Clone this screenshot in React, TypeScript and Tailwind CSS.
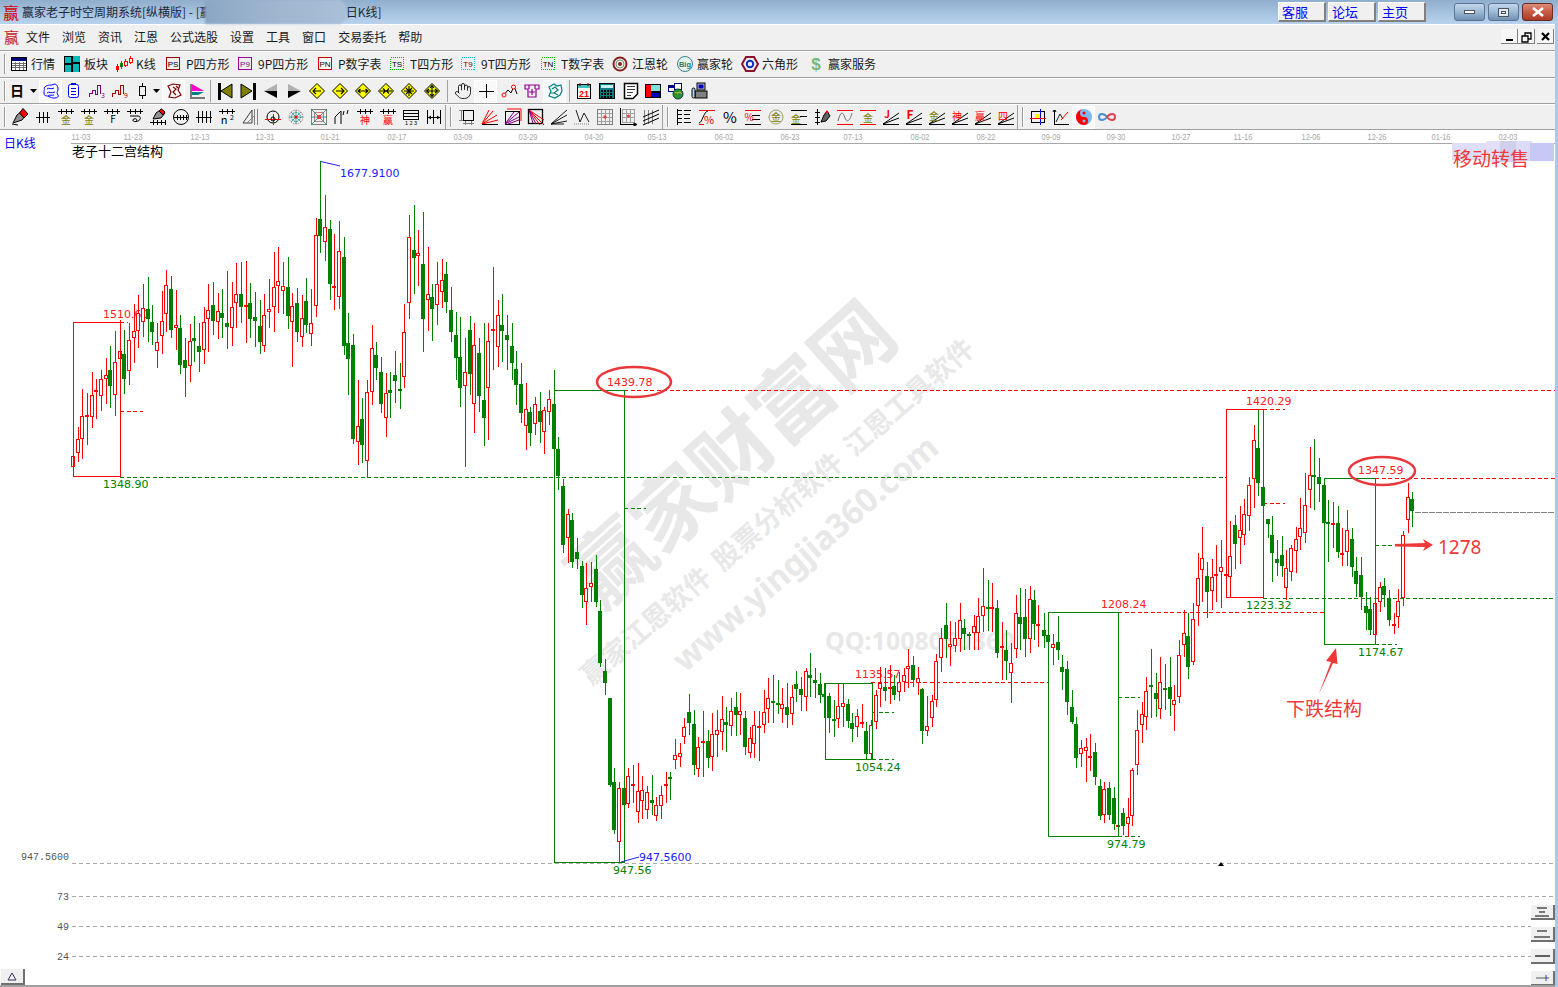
import React from "react";
import { Hand } from "lucide-react";

type Row = [number, number, number, number, number, number];

// candles read from the chart: x, high, body top, body bottom, low, 1 = up (red)
const left: Row[] = [
  [204,918,918,950,950,1],[218,830,868,910,935,1],[229,716,798,868,928,1],[243,728,796,800,885,1],[257,666,736,800,833,1],[269,688,720,724,806,1],[282,660,688,737,782,1],[296,624,676,688,762,1],[308,588,660,708,775,0],[322,543,637,734,797,1],
  [336,510,604,628,680,1],[347,540,612,687,732,0],[361,520,571,662,705,1],[375,462,544,563,640,1],[387,436,490,544,593,1],[400,402,475,515,560,1],[414,380,477,507,575,0],[425,465,516,545,585,0],[439,520,576,602,653,1],[453,422,514,557,612,1],
  [465,360,406,491,545,1],[478,378,417,540,563,0],[492,420,526,533,600,1],[504,495,534,645,672,0],[518,565,630,654,740,0],[532,522,574,647,695,1],[543,498,564,572,635,0],[557,520,588,606,665,0],[571,470,517,599,642,1],[582,402,481,506,605,1],
  [596,395,465,513,555,0],[610,430,484,517,567,1],[621,417,489,503,565,0],[635,363,519,530,596,0],[649,397,472,533,588,1],[660,339,433,458,535,1],[674,336,432,470,518,0],[688,333,466,468,580,1],[700,400,460,507,565,0],[714,425,501,513,590,0],
  [728,450,528,576,612,0],[739,432,496,587,605,1],[753,388,478,485,533,1],[767,306,412,470,545,1],[778,291,394,407,490,1],[792,335,409,422,492,1],[806,321,411,497,537,0],[817,430,469,517,650,1],[831,415,460,545,575,0],[845,435,505,562,590,1],
  [856,383,453,525,550,0],[870,416,520,551,587,1],[884,205,256,467,500,1],[896,35,207,257,308,0],[909,135,232,277,333,1],[924,210,237,402,450,0],[936,252,408,410,480,1],[949,213,304,440,478,1],[963,262,321,587,615,0],[974,490,579,626,735,0],
  [988,552,585,866,882,0],[1002,690,829,875,945,1],[1013,744,807,884,938,0],[1027,690,727,932,980,1],[1041,525,595,727,765,1],[1052,575,615,654,690,0],[1066,621,666,762,790,0],[1080,670,730,803,860,1],[1092,665,720,728,804,0],[1106,603,675,693,760,0],
  [1120,640,717,721,777,0],[1131,462,547,680,715,1],[1145,195,262,458,507,1],[1159,165,300,323,432,0],[1170,240,310,319,407,1],[1184,186,342,507,605,0],[1198,291,433,449,543,1],[1209,403,441,476,573,0],[1223,336,403,464,525,1],[1237,327,391,425,473,1],
  [1248,337,372,456,490,0],[1262,411,480,546,575,0],[1276,487,555,623,690,0],[1288,502,622,714,770,0],[1302,565,667,707,950,1],[1316,498,541,671,735,0],[1327,518,586,761,848,1],[1341,565,610,738,785,0],[1355,520,750,804,887,0],[1366,518,574,713,869,1],
  [1380,351,537,540,660,1],[1394,450,496,590,650,1],[1406,432,525,543,636,0],[1419,495,555,570,660,0],[1433,518,588,639,690,0],[1444,603,657,705,765,0],[1458,640,702,788,820,0],[1472,700,778,827,900,1],[1484,770,786,849,888,0],[1498,742,763,821,855,1],
  [1512,727,783,816,880,0],[1523,770,781,845,912,1],[1537,720,748,785,825,1],[1551,660,762,897,960,0],[1562,860,897,977,1020,0],
];

const middle: Row[] = [
  [69,358,378,555,580,0],[84,448,463,533,610,1],[96,460,480,606,624,0],[111,535,576,597,628,0],[126,603,618,705,743,0],[138,610,685,725,795,1],[153,605,670,682,725,1],[168,585,627,725,740,0],[180,720,753,908,922,0],[195,898,934,968,1005,0],
  [210,1014,1014,1275,1280,0],[222,1225,1266,1410,1422,0],[237,1265,1285,1445,1507,1],[252,1240,1284,1334,1345,0],[264,1225,1249,1331,1345,1],[279,1215,1272,1274,1330,1],[294,1210,1294,1357,1390,1],[306,1248,1291,1324,1378,1],[321,1278,1297,1351,1378,1],[336,1245,1320,1329,1365,0],
  [348,1310,1336,1367,1382,1],[363,1278,1306,1339,1378,1],[378,1235,1272,1275,1330,1],[390,1237,1252,1256,1320,0],[405,1137,1186,1201,1227,1],[420,1150,1178,1190,1220,1],[432,1073,1102,1130,1152,1],[447,1003,1056,1089,1125,0],[462,1050,1092,1215,1245,0],[474,1130,1162,1226,1250,1],
  [489,1052,1143,1145,1250,1],[504,1110,1143,1194,1225,0],[516,1060,1123,1190,1232,1],[531,1050,1111,1124,1190,1],[546,1008,1078,1115,1170,1],[558,1040,1086,1096,1175,0],[573,1014,1054,1097,1128,1],[588,996,1041,1066,1128,0],[600,1000,1054,1064,1125,1],[615,1052,1075,1161,1185,0],
  [630,1100,1133,1178,1195,1],[642,1054,1096,1151,1195,1],[657,1054,1097,1105,1202,1],[672,990,1057,1094,1118,1],[684,955,1015,1048,1090,1],[699,945,1023,1027,1090,0],[714,960,1028,1030,1062,0],[726,985,1031,1046,1090,1],[741,970,1041,1065,1103,0],[756,975,1012,1061,1095,1],
  [768,932,973,987,1025,0],[783,950,987,1005,1052,0],[798,925,934,1010,1052,1],[810,880,945,953,1012,0],[825,925,961,968,1015,0],[840,940,972,1004,1030,0],[852,968,1003,1012,1075,0],[867,998,1008,1074,1118,0],[882,1020,1078,1081,1130,0],[894,970,1039,1076,1105,1],
  [909,968,1030,1042,1100,1],[924,1018,1033,1083,1105,0],[936,1060,1090,1108,1145,0],[951,1047,1069,1102,1130,1],[966,1032,1087,1088,1105,1],[978,1085,1114,1182,1198,0],[993,1080,1094,1181,1200,1],[1008,990,1006,1085,1107,1],[1020,920,968,988,1040,1],[1035,925,982,992,1022,0],
  [1050,915,982,984,1032,1],[1062,945,979,1004,1020,0],[1077,935,965,995,1022,1],[1092,925,946,965,995,1],[1104,868,919,926,985,1],[1119,888,915,960,980,0],[1134,920,955,970,1005,1],[1146,985,987,1112,1152,0],[1161,1008,1099,1112,1127,1],[1176,1005,1024,1073,1100,1],
  [1188,882,902,1020,1040,1],[1203,803,835,893,935,1],[1218,730,796,837,895,0],[1230,782,853,862,918,1],[1245,785,835,857,875,1],[1260,730,781,838,875,1],[1272,776,804,822,870,0],[1287,815,823,825,870,0],[1302,765,799,820,870,1],[1314,715,768,818,870,1],
  [1329,625,737,767,815,1],[1344,660,742,744,812,0],[1356,670,740,748,815,1],[1371,720,745,878,895,0],[1386,785,859,865,960,1],[1398,810,870,902,960,0],[1413,850,908,938,1030,1],[1428,705,760,868,895,1],[1440,685,771,792,870,0],[1455,688,771,838,892,0],
  [1470,678,718,838,880,1],[1482,690,720,792,840,0],[1494,735,792,794,862,1],
];

const right: Row[] = [
  [12,700,751,767,805,0],[24,735,766,785,830,0],[39,763,793,803,855,1],[54,708,786,809,840,0],[66,825,862,875,930,0],[81,843,867,965,1005,0],[96,930,982,1025,1032,0],[108,1012,1033,1133,1165,0],[123,1080,1105,1123,1160,1],[138,1075,1102,1112,1205,1],
  [150,1063,1127,1129,1173,1],[165,1090,1117,1190,1215,0],[180,1197,1218,1307,1320,0],[192,1205,1228,1306,1328,1],[207,1206,1224,1305,1320,0],[222,1220,1254,1331,1350,0],[234,1285,1336,1342,1370,1],[249,1283,1300,1337,1365,0],[264,1255,1312,1333,1372,1],[276,1165,1171,1309,1337,1],
  [291,990,1051,1154,1185,1],[306,965,1003,1034,1090,1],[318,890,934,1012,1050,1],[333,808,915,919,1015,0],[348,880,940,956,1010,0],[360,830,907,986,1018,1],[375,852,924,927,990,0],[390,832,922,957,1007,0],[402,915,961,976,1052,1],[417,780,826,950,970,1],
  [432,690,760,796,830,1],[444,700,768,860,897,0],[459,670,718,845,855,1],[474,520,595,677,738,1],[486,442,535,569,665,1],[501,545,588,635,714,0],[516,537,592,632,690,1],[528,495,583,589,665,1],[543,480,562,577,683,1],[558,495,582,584,652,1],
  [570,423,529,590,650,1],[585,405,435,491,567,0],[600,378,451,475,552,1],[612,358,403,466,495,1],[627,292,316,409,452,1],[642,135,181,298,385,1],[654,90,204,308,347,0],[669,295,321,377,480,0],[684,418,418,431,475,0],[696,408,465,518,605,0],
  [711,480,538,548,587,0],[726,467,526,557,590,0],[738,510,565,625,660,1],[753,495,503,577,603,1],[768,440,478,512,580,1],[780,353,443,470,510,1],[795,280,376,460,490,1],[810,200,284,331,383,1],[822,178,286,289,390,0],[837,235,292,311,367,0],
  [852,315,316,430,455,0],[864,360,425,430,545,0],[879,367,428,436,505,1],[894,378,430,515,535,0],[906,445,520,523,557,1],[921,390,451,517,557,1],[936,445,478,560,590,0],[948,530,574,613,650,0],[963,530,586,650,690,0],[978,637,679,700,750,0],
  [990,650,688,749,765,0],[1005,655,670,766,795,1],[1020,605,622,667,695,1],[1032,595,619,644,680,0],[1047,630,656,720,738,0],[1062,700,731,733,762,1],[1074,628,664,712,745,1],[1089,453,466,655,678,1],[1104,310,350,421,460,1],[1116,337,358,394,440,0],
];

const toPage = (rows: Row[], sx: number, ox: number, oy: number) =>
  rows.map(([x, h, t, b, l, up]) => ({
    x: Math.round(ox + x / sx),
    h: Math.round(oy + h / 3),
    t: Math.round(oy + t / 3),
    b: Math.round(oy + b / 3),
    l: Math.round(oy + l / 3),
    up: up === 1,
  }));

const candles = [
  ...toPage(left, 2.8, 0, 150),
  ...toPage(middle, 3, 540, 360),
  ...toPage(right, 3, 1040, 380),
];

const RED = "#ff0000";
const GREEN = "#008000";

const dates: [string, number][] = [
  ["11-03", 81], ["11-23", 133], ["12-13", 200], ["12-31", 265], ["01-21", 330], ["02-17", 397], ["03-09", 463], ["03-29", 528],
  ["04-20", 594], ["05-13", 657], ["06-02", 724], ["06-23", 790], ["07-13", 853], ["08-02", 920], ["08-22", 986], ["09-09", 1051],
  ["09-30", 1116], ["10-27", 1181], ["11-16", 1243], ["12-06", 1311], ["12-26", 1377], ["01-16", 1441], ["02-03", 1508],
];

// x1, x2, y, colour
const dashes: [number, number, number, string][] = [
  [624, 1556, 390.5, RED], [120, 1226, 477.5, GREEN], [1375, 1556, 478.5, RED], [120, 128, 322.5, RED], [120, 143, 411.5, RED],
  [624, 646, 508.5, GREEN], [871, 1048, 682.5, RED], [872, 894, 712.5, GREEN], [872, 894, 759.5, GREEN], [1118, 1140, 697.5, GREEN],
  [1118, 1324, 612.5, RED], [1263, 1285, 409.5, RED], [1263, 1285, 503.5, RED], [1263, 1556, 598.5, GREEN], [1375, 1397, 545.5, GREEN],
  [1375, 1397, 644.5, GREEN], [1118, 1140, 836.5, GREEN],
];

const boxes: [number, number, number, number, string][] = [
  [73, 322, 47, 154, RED], [554, 390, 70, 472, GREEN], [825, 683, 47, 76, GREEN], [1048, 612, 70, 224, GREEN], [1226, 409, 37, 188, RED], [1324, 478, 51, 166, GREEN],
];

// x, y, text, colour
const labels: [number, number, string, string][] = [
  [340, 177, "1677.9100", "#2020ff"], [103, 318, "1510.60", "#ff2020"], [103, 488, "1348.90", GREEN], [607, 386, "1439.78", "#ff2020"],
  [613, 874, "947.56", GREEN], [639, 861, "947.5600", "#2020ff"], [855, 678, "1135.57", "#ff2020"], [855, 771, "1054.24", GREEN],
  [1101, 608, "1208.24", "#ff2020"], [1107, 848, "974.79", GREEN], [1246, 405, "1420.29", "#ff2020"], [1246, 609, "1223.32", GREEN],
  [1358, 474, "1347.59", "#ff2020"], [1358, 656, "1174.67", GREEN],
];

const Chart = () => (
  <svg width={1555} height={857} viewBox="0 130 1555 857" className="block bg-white">
    {dates.map(([d, x]) => (
      <text key={x} x={x} y={140} textAnchor="middle" fontSize={9} textLength={19} lengthAdjust="spacingAndGlyphs" fill="#a8a8a8" className="font-['Liberation_Sans',sans-serif]">{d}</text>
    ))}
    <path d="M71 143.5H1555" stroke="#a8a8a8" />
    <text x={4} y={148} fontSize={12} fill="#0000ff">日K线</text>
    <text x={72} y={156} fontSize={13} fill="#000">老子十二宫结构</text>

    <g fill="#e8e8e8" fontWeight={700}>
      <text x={733} y={483} fontSize={81} textAnchor="middle" transform="rotate(-42 733 455)">赢家财富网</text>
      <text x={778} y={521} fontSize={27} textAnchor="middle" transform="rotate(-41 778 512)" wordSpacing={6}>赢家江恩软件 股票分析软件 江恩工具软件</text>
      <text x={805} y={565} fontSize={33} textAnchor="middle" transform="rotate(-41 805 553)" className="font-['Noto_Sans',sans-serif]">www.yingjia360.com</text>
      <text x={825} y={650} fontSize={25} className="font-['Noto_Sans',sans-serif]">QQ:1008050360</text>
    </g>

    <g fill="#dedef8" shapeRendering="crispEdges">
      <rect x={1452} y={143} width={34} height={17} />
      <rect x={1486} y={141} width={30} height={21} fill="#e0e0f8" />
      <rect x={1500} y={141} width={16} height={21} fill="#d0d0ee" />
      <rect x={1516} y={141} width={16} height={20} fill="#dcdcf6" />
      <rect x={1530} y={143} width={24} height={18} fill="#c8c8f6" />
    </g>

    <g strokeDasharray="4 2.5" fill="none" shapeRendering="crispEdges">
      {dashes.map(([x1, x2, y, c]) => (
        <path key={`${x1}-${y}`} d={`M${x1} ${y}H${x2}`} stroke={c} />
      ))}
    </g>
    <path d="M1415 512.5H1554" stroke="#808080" strokeDasharray="6 1" shapeRendering="crispEdges" />
    <g stroke="#aaaaaa" strokeDasharray="4 3" shapeRendering="crispEdges">
      <path d="M72 863.5H1555" />
      <path d="M72 896.5H1555" />
      <path d="M72 926.5H1531" />
      <path d="M72 956.5H1531" />
    </g>
    <g fontSize={10} fill="#555555" textAnchor="end" className="font-['Liberation_Mono',monospace]">
      <text x={69} y={860}>947.5600</text>
      <text x={69} y={900}>73</text>
      <text x={69} y={930}>49</text>
      <text x={69} y={960}>24</text>
    </g>

    <g fontSize={11} className="font-['DejaVu_Sans',sans-serif]">
      {labels.map(([x, y, t, c]) => (
        <text key={t} x={x} y={y} fill={c}>{t}</text>
      ))}
    </g>

    <g shapeRendering="crispEdges">
      {candles.map((c) => {
        const color = c.up ? RED : GREEN;
        return (
          <g key={c.x}>
            <path d={`M${c.x + 0.5} ${c.h}V${c.l}`} stroke={color} />
            {c.up && c.b - c.t > 1 ? (
              <rect x={c.x - 1.5} y={c.t + 0.5} width={3} height={c.b - c.t - 1} fill="#fff" stroke={color} />
            ) : (
              <rect x={c.x - 2} y={c.t} width={4} height={Math.max(c.b - c.t, 2)} fill={color} />
            )}
          </g>
        );
      })}
      {boxes.map(([x, y, w, h, c]) => (
        <rect key={x} x={x + 0.5} y={y + 0.5} width={w} height={h} fill="none" stroke={c} />
      ))}
      <path d="M320.5 161V200" stroke={GREEN} />
    </g>

    <path d="M321 161.5L340 166" stroke="#2020ff" />
    <path d="M621 862L639 857" stroke="#2020ff" />
    <path d="M1218 866L1221 862L1224 866Z" fill="#000" />

    <ellipse cx={634} cy={382} rx={37} ry={15} fill="none" stroke="#e8383c" strokeWidth={2.5} />
    <ellipse cx={1382} cy={471} rx={33} ry={14} fill="none" stroke="#e8383c" strokeWidth={2.5} />
    <path d="M1395 544L1425 543L1423 539L1433 545L1423 551L1425 547L1395 546.5Z" fill="#f03838" />
    <path d="M1318.5 695L1331 662L1326 661L1336 648L1337.5 664L1333 663Z" fill="#f03838" />
    <text x={1438} y={554} fontSize={19} fill="#f03838" className="font-['Noto_Sans',sans-serif]">1278</text>
    <text x={1286} y={716} fontSize={19} fill="#f03838">下跌结构</text>
    <text x={1453} y={166} fontSize={19} fill="#f03838">移动转售</text>
  </svg>
);

// icons ------------------------------------------------------------------
const Ico = ({ children, w = 18 }: { children: React.ReactNode; w?: number }) => (
  <svg width={w} height={18} viewBox={`0 0 ${w} 18`} fill="none" stroke="#000" className="block">
    {children}
  </svg>
);

const comb = <path shapeRendering="crispEdges" d="M1 3.5H17M4.5 1V6M9.5 1V6M14.5 1V6" />;
const fan = <path d="M1 16L17 5M1 16L17 10M1 16.5H17" />;
const rules = <path shapeRendering="crispEdges" d="M1 2.5H17M1 16.5H17" stroke="#ff0000" />;

const Txt = ({ x = 9, y, s = 10, c = "#000", b = false, children }: { x?: number; y: number; s?: number; c?: string; b?: boolean; children: React.ReactNode }) => (
  <text x={x} y={y} fontSize={s} fill={c} stroke="none" textAnchor="middle" fontWeight={b ? 700 : 400}>
    {children}
  </text>
);

const BoxIcon = ({ t, c, fill = "#f0f0f0" }: { t: string; c: string; fill?: string }) => (
  <Ico w={18}>
    <rect x={1.5} y={2.5} width={13} height={12} fill={fill} stroke={c} strokeDasharray={c === "#00c000" || c === "#00c8c8" ? "1 1" : undefined} shapeRendering="crispEdges" />
    <text x={8} y={12} fontSize={8} textAnchor="middle" fill={c === "#a000a0" ? "#800080" : c === "#00c8c8" ? "#800000" : "#000"} stroke="none" className="font-['Liberation_Sans',sans-serif]">{t}</text>
  </Ico>
);

const Diamond = ({ d }: { d: string }) => (
  <Ico>
    <path d="M9 1.5L16.5 9L9 16.5L1.5 9Z" fill="#ffff00" />
    <path d={d} strokeWidth={1.1} />
  </Ico>
);

const topBar: [React.ReactNode, string, string][] = [
  [<Ico><rect x={1.5} y={2.5} width={15} height={13} fill="#fff" /><rect x={2} y={3} width={14} height={3} fill="#000080" stroke="none" /><path shapeRendering="crispEdges" stroke="#707070" d="M2 8.5H16M2 10.5H16M2 12.5H16M5.5 7V15M9.5 7V15M13.5 7V15" /></Ico>, "行情", "w-[53px]"],
  [<Ico><rect x={1} y={1} width={16} height={16} fill="#000" stroke="none" /><g fill="#00b8b8" stroke="none"><rect x={2} y={2} width={6} height={6} /><rect x={10} y={1} width={7} height={6} /><rect x={2} y={10} width={6} height={7} /><rect x={10} y={9} width={6} height={8} /></g></Ico>, "板块", "w-[52px]"],
  [<Ico><g shapeRendering="crispEdges"><path stroke="#ff0000" d="M2.5 9V17M10.5 4V12M15.5 1V9" /><path stroke="#008000" d="M6.5 6V14" /><rect x={1} y={11} width={3} height={4} fill="#ff0000" stroke="none" /><rect x={5} y={8} width={3} height={4} fill="#008000" stroke="none" /><rect x={9} y={6} width={3} height={4} fill="#fff" stroke="#ff0000" /><rect x={14} y={3} width={3} height={4} fill="#fff" stroke="#ff0000" /></g></Ico>, "K线", "w-[50px]"],
  [<BoxIcon t="PS" c="#a00000" />, "P四方形", "w-[72px]"],
  [<BoxIcon t="P9" c="#a000a0" />, "9P四方形", "w-[80px]"],
  [<BoxIcon t="PN" c="#d00000" fill="#fff" />, "P数字表", "w-[72px]"],
  [<BoxIcon t="TS" c="#00c000" />, "T四方形", "w-[71px]"],
  [<BoxIcon t="T9" c="#00c8c8" />, "9T四方形", "w-[80px]"],
  [<BoxIcon t="TN" c="#00c000" />, "T数字表", "w-[71px]"],
  [<Ico><circle cx={9} cy={9} r={6.5} stroke="#8a1f1f" strokeWidth={2} /><circle cx={9} cy={9} r={4} stroke="#6a9a7a" /><circle cx={9} cy={9} r={2} fill="#8a1f1f" stroke="none" /></Ico>, "江恩轮", "w-[65px]"],
  [<Ico><circle cx={9} cy={9} r={7.5} stroke="#3f7f90" fill="#e6f2f2" /><text x={9} y={12} fontSize={7.5} fontWeight={700} textAnchor="middle" fill="#2f7a6a" stroke="none" className="font-['Liberation_Sans',sans-serif]">Big</text></Ico>, "赢家轮", "w-[65px]"],
  [<Ico><path d="M5 2H13L17 9L13 16H5L1 9Z" stroke="#8a1030" strokeWidth={2} /><circle cx={9} cy={9} r={3.2} stroke="#1030c0" strokeWidth={2} /></Ico>, "六角形", "w-[66px]"],
  [<Ico><text x={9} y={15} fontSize={17} fontWeight={700} textAnchor="middle" fill="#78b878" stroke="none" className="font-['Liberation_Sans',sans-serif]">$</text></Ico>, "赢家服务", "w-[70px]"],
];

const Slot = ({ on, children, cls = "w-[23px]" }: { on?: boolean; children?: React.ReactNode; cls?: string }) => (
  <div className={`flex h-[23px] shrink-0 items-center justify-center ${cls} ${on ? "border border-white bg-[#f9f9f9]" : ""}`}>{children}</div>
);

const Grip = () => <div className="h-[20px] w-[2px] shrink-0 border-l border-[#9a9a9a] bg-white" />;

const midBar: React.ReactNode[] = [
  <Slot key="a1" cls="w-[22px]"><Ico><text x={9} y={14} fontSize={14} fontWeight={700} textAnchor="middle" fill="#000" stroke="none">日</text></Ico></Slot>,
  <Slot key="a2" cls="w-[10px]"><svg width={7} height={4}><path d="M0 0H7L3.5 4Z" /></svg></Slot>,
  <Slot key="a3" cls="w-[23px] ml-px" on><Ico><g stroke="#0000ff"><path d="M2 6C5 2 8 4 11 2.5S16 4 16 7 14 10 16 13 11 17 8 15 2 15 2 11 3 8 2 6Z" /><path d="M5 7C7 5 9 8 12 6M5 11C7 9 9 12 13 10M6 14C8 12 10 14 12 13" /></g></Ico></Slot>,
  <Slot key="a4"><Ico><rect x={3.5} y={2.5} width={10} height={13} rx={2} stroke="#0000ff" fill="#fff" /><path stroke="#0000ff" shapeRendering="crispEdges" d="M6 1.5H11M6 6.5H11M6 9.5H11M6 12.5H11" /></Ico></Slot>,
  <Slot key="a5"><Ico><path shapeRendering="crispEdges" stroke="#800080" d="M1.5 15V11.5H4.5V8.5H7.5V12.5H9.5V3.5H12.5V12" /><Txt x={15} y={16} s={7} c="#800080">3</Txt></Ico></Slot>,
  <Slot key="a6"><Ico><path shapeRendering="crispEdges" stroke="#a00000" d="M1.5 15V11.5H4.5V8.5H7.5V12.5H9.5V3.5H12.5V12" /><Txt x={15} y={16} s={7} c="#a00000">9</Txt></Ico></Slot>,
  <Slot key="a7" cls="w-[20px] ml-px"><Ico w={12}><path shapeRendering="crispEdges" d="M6.5 1V17" /><rect x={3.5} y={4.5} width={6} height={9} fill="#f0f0f0" shapeRendering="crispEdges" /></Ico></Slot>,
  <Slot key="a8" cls="w-[8px]"><svg width={7} height={4}><path d="M0 0H7L3.5 4Z" /></svg></Slot>,
  <Slot key="a9" cls="w-[23px] ml-[2px]" on><Ico><g stroke="#800000" strokeWidth={1.2}><path d="M3 4L8 2L15 3L13 8L16 13L10 16L4 15L6 10Z" /><path d="M8 5L11 7L8 10L11 13M11 4L13 6" /></g></Ico></Slot>,
  <Slot key="a10"><Ico><path d="M3 2V15" stroke="#000" /><path d="M4 2L16 9H4Z" fill="#ff00d0" stroke="none" /><path d="M4 10H16L10 13H4Z" fill="#008080" stroke="none" /><path d="M2 16H17" stroke="#000" /></Ico></Slot>,
  <div key="a11" className="mx-[2px] h-[22px] w-px shrink-0 bg-[#a0a0a0]" />,
  <Slot key="b1"><Ico><path shapeRendering="crispEdges" d="M2 1H4V17H2Z" fill="#000" /><path d="M16 2V16L5 9Z" fill="#808000" /></Ico></Slot>,
  <Slot key="b2"><Ico><path shapeRendering="crispEdges" d="M14 1H16V17H14Z" fill="#000" /><path d="M2 2V16L13 9Z" fill="#808000" /></Ico></Slot>,
  <Slot key="b3"><Ico><path d="M2 9L15 2V9Z" fill="#b0b0b0" stroke="none" /><path d="M2 9L15 16V9Z" fill="#000" stroke="none" /></Ico></Slot>,
  <Slot key="b4"><Ico><path d="M16 9L3 2V9Z" fill="#b0b0b0" stroke="none" /><path d="M16 9L3 16V9Z" fill="#000" stroke="none" /></Ico></Slot>,
  <Slot key="b5"><Diamond d="M13 9H5M8 6L5 9L8 12" /></Slot>,
  <Slot key="b6"><Diamond d="M5 9H13M10 6L13 9L10 12" /></Slot>,
  <Slot key="b7"><Diamond d="M4 9H14M6.5 7L4 9L6.5 11M11.5 7L14 9L11.5 11" /></Slot>,
  <Slot key="b8"><Diamond d="M3 9H15M6 6.5L8.5 9L6 11.5M12 6.5L9.5 9L12 11.5" /></Slot>,
  <Slot key="b9"><Diamond d="M9 4V14M4 9H14M6 6L12 12M12 6L6 12" /></Slot>,
  <Slot key="b10"><Diamond d="M9 3.5V14.5M3.5 9H14.5M7 6L9 3.5L11 6M7 12L9 14.5L11 12M6 7L3.5 9L6 11M12 7L14.5 9L12 11" /></Slot>,
  <div key="b11" className="flex h-[23px] w-[8px] shrink-0 items-center justify-center"><div className="h-[22px] w-px bg-[#a0a0a0]" /></div>,
  <Slot key="c1"><Hand size={18} strokeWidth={1.1} color="#000" /></Slot>,
  <Slot key="c2" on><Ico><path shapeRendering="crispEdges" d="M9.5 2V16M2 9.5H17" /></Ico></Slot>,
  <Slot key="c3"><Ico><path d="M3 14L8 8L11 11L14 4L17 12" /><circle cx={4} cy={13} r={2} stroke="#ff0000" fill="#fff" /><circle cx={13.5} cy={5} r={2} stroke="#ff0000" fill="#fff" /></Ico></Slot>,
  <Slot key="c4"><Ico><g stroke="#900090" strokeWidth={1.2}><path d="M2 3H16V7H13V15H5V7H2Z" /><path d="M6 3V7M12 3V7M9 7V13M6 10H12" /></g></Ico></Slot>,
  <Slot key="c5" on><Ico><g stroke="#007f80" strokeWidth={1.2}><path d="M3 5L8 2L11 4L15 3L16 9L14 13L9 16L3 14L5 9Z" /><path d="M6 7L9 5L12 8L8 11L12 13M5 11L8 11" /></g></Ico></Slot>,
  <div key="c6" className="flex h-[23px] w-[6px] shrink-0 items-center justify-center"><div className="h-[22px] w-px bg-[#a0a0a0]" /></div>,
  <Slot key="d1"><Ico><rect x={2.5} y={2.5} width={13} height={14} fill="#fff" /><rect x={3} y={3} width={12} height={3} fill="#40c0c0" stroke="none" /><path d="M5 1V4M13 1V4" stroke="#800000" /><text x={9} y={15} fontSize={9} fontWeight={700} fill="#ff0000" stroke="none" textAnchor="middle" className="font-['Liberation_Sans',sans-serif]">21</text></Ico></Slot>,
  <Slot key="d2"><Ico><rect x={1.5} y={1.5} width={15} height={15} fill="#008080" /><rect x={3} y={3} width={12} height={3} fill="#c8f0f0" stroke="none" /><path stroke="#000" strokeDasharray="2 1" shapeRendering="crispEdges" d="M3 8.5H15M3 11.5H15M3 14.5H15" strokeWidth={2} /></Ico></Slot>,
  <Slot key="d3"><Ico><path d="M3.5 1.5H16.5V12L12 16.5H3.5Z" fill="#fff" strokeWidth={1.5} /><path shapeRendering="crispEdges" d="M6 4.5H14M6 7.5H14M6 10.5H12M6 13.5H10" stroke="#404040" /></Ico></Slot>,
  <Slot key="d4"><Ico><rect x={1} y={2} width={16} height={14} fill="#000" stroke="none" /><rect x={2} y={3} width={5} height={12} fill="#ff0000" stroke="none" /><rect x={7} y={3} width={9} height={6} fill="#80e0e0" stroke="none" /><rect x={8} y={11} width={7} height={4} fill="#0000c0" stroke="none" /></Ico></Slot>,
  <Slot key="d5"><Ico><rect x={1.5} y={3.5} width={7} height={6} fill="#fff" stroke="#000080" /><rect x={7.5} y={1.5} width={7} height={6} fill="#fff" stroke="#000080" /><rect x={2} y={4} width={6} height={2} fill="#000080" stroke="none" /><circle cx={11} cy={12} r={5} fill="#309030" stroke="#004040" /><path d="M8 10C10 13 12 8 15 12" stroke="#e8c040" /></Ico></Slot>,
  <Slot key="d6"><Ico><rect x={7} y={1} width={8} height={7} fill="#c0c0c0" stroke="#000" /><rect x={8.5} y={2.5} width={5} height={4} fill="#0000c0" stroke="none" /><rect x={5} y={9} width={12} height={7} fill="#808080" stroke="#000" /><rect x={2} y={6} width={3} height={10} rx={1.5} fill="#b0d0f0" stroke="#000" /></Ico></Slot>,
];

const Pen = () => (
  <Ico>
    <path d="M2 15L6 7L11 3L15 7L11 12Z" fill="#909090" />
    <path d="M8.5 5L12 0.5L17 6L13 10Z" fill="#ff0000" stroke="#000" />
    <path d="M1 16L7 17" />
  </Ico>
);

const Frame3 = ({ c }: { c: React.ReactNode }) => (
  <Ico>
    {rules}
    {c}
  </Ico>
);

const lowBar: React.ReactNode[][] = [
  [
    <Pen />,
    <Ico><path shapeRendering="crispEdges" d="M2 9.5H16M5.5 4V15M9.5 4V15M13.5 4V15" /></Ico>,
    <Ico>{comb}<Txt y={16} s={10} c="#808000">金</Txt></Ico>,
    <Ico>{comb}<Txt y={16} s={10} c="#808000">金</Txt></Ico>,
    <Ico>{comb}<Txt x={10} y={15} s={10}>F</Txt></Ico>,
    <Ico>{comb}<path d="M4 8H12C15 8 15 12 12 13C8 15 5 12 8 11C10 10 12 12 10 13" /></Ico>,
    <Ico><path d="M4 11L7 5L12 1.5L16 5L12 10Z" fill="#909090" /><path d="M10 3L12.5 1L16 4L14 7Z" fill="#ff0000" /><path shapeRendering="crispEdges" d="M1 14.5H17M4.5 12V17M8.5 12V17M12.5 12V17M16.5 12V17" /></Ico>,
    <Ico><circle cx={9} cy={9} r={7.5} /><path shapeRendering="crispEdges" d="M2 9.5H16M5.5 7V12M8.5 7V12M11.5 7V12M14.5 7V12" /></Ico>,
    <Ico><path shapeRendering="crispEdges" d="M1 9.5H17M3.5 3V15M7.5 3V15M11.5 3V15M15.5 3V15" /></Ico>,
    <Ico>{comb}<Txt x={6} y={16} s={11}>n</Txt><Txt x={14} y={12} s={7}>2</Txt></Ico>,
    <Ico><path d="M2 15L11 2V15Z" stroke="#404040" /><path shapeRendering="crispEdges" stroke="#808080" d="M13.5 1V17M16.5 1V17M6 15L14 7" /></Ico>,
    <Ico><circle cx={9} cy={9} r={6} /><path stroke="#ff0000" shapeRendering="crispEdges" d="M1 11.5H17M9.5 6V17" /><circle cx={9} cy={11} r={2} /></Ico>,
    <Ico><circle cx={9} cy={9} r={7} stroke="#d08080" strokeDasharray="1.5 1" /><circle cx={9} cy={9} r={4.5} stroke="#008080" strokeDasharray="1.5 1" /><path stroke="#008080" d="M2 9H16M9 2V16M4 4L14 14M14 4L4 14" strokeWidth={0.7} /><circle cx={9} cy={9} r={1.5} fill="#ff0000" stroke="none" /></Ico>,
    <Ico><rect x={1.5} y={1.5} width={15} height={15} stroke="#808080" /><rect x={4.5} y={4.5} width={9} height={9} stroke="#c08080" /><path stroke="#008080" strokeWidth={0.7} d="M1 1L17 17M17 1L1 17M1 9H17" /><rect x={7} y={7} width={4} height={4} fill="#e04040" stroke="none" /></Ico>,
    <Ico><path d="M2 16V9L8 3V16M11 3L10 7M15 2L14 6" /></Ico>,
    <Ico>{comb}<Txt y={16} s={10} c="#ff0000">神</Txt></Ico>,
    <Ico>{comb}<Txt y={16} s={10} c="#ff0000">赢</Txt></Ico>,
    <Ico><path shapeRendering="crispEdges" d="M1.5 3V12M16.5 3V12M1 2.5H17M1 5.5H17M1 8.5H17M1 11.5H17" /><text x={9} y={17} fontSize={5.5} textAnchor="middle" fill="#000" stroke="none" className="font-['Liberation_Sans',sans-serif]">1 2 3</text></Ico>,
    <Ico><path shapeRendering="crispEdges" d="M2.5 2V16M15.5 2V16M8.5 2V16M3 9.5H15" /><path d="M3 9.5L6 7.5V11.5ZM15 9.5L12 7.5V11.5Z" fill="#000" stroke="none" /></Ico>,
  ],
  [
    <Ico><rect x={5.5} y={2.5} width={10} height={10} stroke="#000" /><path shapeRendering="crispEdges" stroke="#808080" d="M1 2.5H5M1 12.5H5M3.5 3V12M5 15.5H16M7.5 13V17M13.5 13V17" /></Ico>,
    <Ico><g stroke="#ff0000"><path d="M1 16L8 2M1 16L12 3M1 16L16 7M1 16L17 12" /></g><path d="M1 16.5H17" stroke="#000" /></Ico>,
    <Ico><rect x={1.5} y={3.5} width={14} height={13} /><path d="M1 16L15 4M1 16L10 4M1 16L15 9M4 16L15 12" stroke="#800080" /><path d="M3 1H17V13" stroke="#ff0000" /></Ico>,
    <Ico><rect x={1.5} y={1.5} width={14} height={14} fill="#f0f0f0" strokeWidth={1.3} /><path d="M2 2L17 17M2 2L13 17M2 2L17 12" stroke="#ff0000" /><path d="M2 2L6 15M2 2L9 16" stroke="#800080" /></Ico>,
    <Ico><path d="M1 16L17 2M1 16L17 7M1 16L17 13M1 16H14" strokeWidth={0.9} /></Ico>,
    <Ico><path d="M3 2L7 14L11 5L16 14" stroke="#202020" /><path d="M1 16H17" stroke="#808080" strokeDasharray="1 1" /></Ico>,
    <Ico><rect x={1.5} y={1.5} width={15} height={15} stroke="#808080" /><path shapeRendering="crispEdges" stroke="#a0a0a0" d="M5.5 2V16M9.5 2V16M13.5 2V16M2 5.5H16M2 9.5H16M2 13.5H16" /><circle cx={9} cy={9} r={1.7} fill="#e04040" stroke="none" /></Ico>,
    <Ico><rect x={3.5} y={1.5} width={12} height={13} stroke="#a0a0a0" /><path shapeRendering="crispEdges" stroke="#a0a0a0" d="M7.5 2V14M11.5 2V14M4 5.5H15M4 9.5H15" /><circle cx={9.5} cy={8} r={1.6} fill="#e04040" stroke="none" /><path shapeRendering="crispEdges" d="M1.5 0V16.5H17" /><path d="M15 15L18 16.5L15 18Z" fill="#000" /></Ico>,
    <Ico><path stroke="#808080" shapeRendering="crispEdges" d="M2.5 2V16M6.5 2V16M10.5 2V16" /><path d="M1 9L17 2M1 13L17 6M1 17L17 10" /></Ico>,
  ],
  [
    <Ico><path shapeRendering="crispEdges" d="M2.5 1V17M2 2.5H7M9 2.5H16M2 6.5H7M9 6.5H15M2 10.5H7M9 10.5H15M2 14.5H7M9 14.5H16" strokeWidth={1.2} /></Ico>,
    <Ico><path d="M1 2.5H17" stroke="#ff0000" shapeRendering="crispEdges" /><path d="M1 15C4 15 6 3 10 3" /><path d="M1 16.5H6" stroke="#ff0000" /><Txt x={11} y={16} s={11} c="#ff0000">%</Txt></Ico>,
    <Ico><Txt y={15} s={15}>%</Txt></Ico>,
    <Ico><path shapeRendering="crispEdges" d="M8 7.5H16M8 11.5H16M1 16.5H17" /><path stroke="#ff0000" shapeRendering="crispEdges" d="M1 2.5H17" /><Txt x={5} y={13} s={10} c="#ff0000">%</Txt></Ico>,
    <Ico><circle cx={9} cy={9} r={7} stroke="#a0a060" fill="#ececec" /><Txt y={13} s={10} c="#808000">金</Txt></Ico>,
    <Ico><path shapeRendering="crispEdges" d="M1 2.5H17M10 8.5H17M1 16.5H17" /><Txt x={6} y={15} s={10} c="#808000">金</Txt></Ico>,
    <Ico><path shapeRendering="crispEdges" d="M4.5 1V17M2 4.5H7M2 9.5H7M2 14.5H7" /><path d="M8 14L11 7L14 3L17 8L13 13Z" fill="#606060" /><path d="M12 5L14 2L16 5Z" fill="#ff0000" stroke="none" /></Ico>,
    <Frame3 c={<path d="M2 13C5 2 7 4 9 10C11 15 14 13 16 5" stroke="#707070" />} />,
    <Frame3 c={<Txt y={14} s={10} c="#808000">金</Txt>} />,
    <Ico>{fan}<Txt x={5} y={10} s={10} c="#ff0000" b>J</Txt></Ico>,
    <Ico>{fan}<Txt x={5} y={11} s={12} c="#ff0000" b>F</Txt></Ico>,
    <Ico>{fan}<Txt x={6} y={12} s={10} c="#808000">金</Txt></Ico>,
    <Ico>{fan}<Txt x={6} y={12} s={10} c="#ff0000">神</Txt></Ico>,
    <Ico>{fan}<Txt x={6} y={12} s={10} c="#ff0000">赢</Txt></Ico>,
    <Ico>{fan}<Txt x={6} y={12} s={10} c="#ff0000">四</Txt></Ico>,
  ],
  [
    <Ico><path shapeRendering="crispEdges" d="M2.5 3V15M15.5 3V15M2 3.5H16M2 14.5H16" /><rect x={6} y={6} width={6} height={5} fill="#ffff00" stroke="none" /><path shapeRendering="crispEdges" stroke="#0000ff" d="M11.5 1V17" /><path shapeRendering="crispEdges" stroke="#ff0000" d="M1 10.5H17" /></Ico>,
    <Ico><path shapeRendering="crispEdges" d="M2.5 2V16H17" /><path d="M2 2L1 4M3 2L4 4" /><path d="M4 14L8 6L11 11" stroke="#202020" /><path d="M9 12L16 4" stroke="#ff0000" /></Ico>,
    <Ico><circle cx={9} cy={9} r={8} fill="#80b8f0" stroke="none" /><path d="M9 1A8 8 0 0 0 9 17A4 4 0 0 0 9 9A4 4 0 0 1 9 1Z" fill="#ff0000" stroke="none" /><circle cx={9} cy={5} r={1.5} fill="#ff0000" stroke="none" /><circle cx={9} cy={13} r={1.5} fill="#80b8f0" stroke="none" /></Ico>,
    <Ico><path d="M9 9C6 5 1 5 1 9S6 13 9 9" stroke="#4a90d0" strokeWidth={2} /><path d="M9 9C12 13 17 13 17 9S12 5 9 9" stroke="#e04050" strokeWidth={2} /></Ico>,
  ],
];

const SepGrip = ({ cls }: { cls: string }) => (
  <div className={`flex h-[23px] shrink-0 items-center gap-[4px] ${cls}`}>
    <div className="h-[24px] w-px bg-[#a0a0a0]" />
    <Grip />
  </div>
);

const App = () => (
  <div className="flex h-[987px] w-[1558px] flex-col overflow-hidden bg-[#f0f0f0] text-[12px] text-[#1a1a1a] font-['Noto_Sans_CJK_SC','Liberation_Sans',sans-serif]">
    {/* title bar */}
    <div className="relative flex h-[24px] shrink-0 items-center bg-gradient-to-b from-[#90aecd] to-[#b9d3ee] pl-[3px] pr-[5px]">
      <span className="w-[19px] text-[16px] leading-none text-[#d00000]">赢</span>
      <span className="text-[12px] text-[#1f2a38]">赢家老子时空周期系统[纵横版] - [赢</span>
      <span className="w-[134px]" />
      <span className="text-[12px] text-[#1f2a38]">日K线]</span>
      <div className="absolute left-[205px] top-0 h-[24px] w-[141px] rounded-r-[8px] bg-gradient-to-r from-[#8ba6c4] via-[#9fb6cf] to-[#aabfd8] blur-[1px]" />
      <div className="ml-auto flex h-[20px] gap-[2px]">
        {["客服", "论坛", "主页"].map((t) => (
          <div key={t} className="flex w-[48px] items-center border-b-2 border-l border-r-2 border-t border-b-[#808080] border-l-white border-r-[#808080] border-t-white bg-[#f0f0f0] pl-[3px] text-[13px] text-[#0000ff]">{t}</div>
        ))}
      </div>
      <div className="ml-[28px] flex h-[18px] gap-[3px]">
        <div className="flex w-[31px] items-center justify-center rounded-[3px] border border-[#5c7592] bg-gradient-to-b from-[#c4d6ea] via-[#9db8d4] to-[#6f90b4]">
          <div className="h-[4px] w-[11px] border border-[#50545c] bg-white" />
        </div>
        <div className="flex w-[31px] items-center justify-center rounded-[3px] border border-[#5c7592] bg-gradient-to-b from-[#c4d6ea] via-[#9db8d4] to-[#6f90b4]">
          <div className="flex h-[9px] w-[11px] items-center justify-center border border-[#50545c] bg-[#e0e8f0]"><div className="h-[3px] w-[5px] border border-[#50545c]" /></div>
        </div>
        <div className="flex w-[31px] items-center justify-center rounded-[3px] border border-[#6a2a28] bg-gradient-to-b from-[#dc8c78] via-[#c85a46] to-[#a83a24]">
          <svg width={12} height={10}><path d="M1 1L11 9M11 1L1 9" stroke="#fff" strokeWidth={2.5} /></svg>
        </div>
      </div>
    </div>

    <div className="flex min-h-0 flex-1 flex-col border-r-[3px] border-[#aac8e8]">
      {/* menu */}
      <div className="flex h-[27px] shrink-0 items-center border-b border-t border-b-[#a0a0a0] border-t-white pb-[2px] pl-[4px] pr-[1px]">
        <span className="w-[22px] text-[15px] leading-none text-[#c81818]">赢</span>
        <div className="flex gap-[12px]">
          {["文件", "浏览", "资讯", "江恩", "公式选股", "设置", "工具", "窗口", "交易委托", "帮助"].map((m) => (
            <span key={m}>{m}</span>
          ))}
        </div>
        <div className="ml-auto flex items-center">
          {[
            <path key="m" d="M4 11H11" stroke="#000" strokeWidth={2} />,
            <path key="r" d="M3 7H9V13H3ZM6 7V4H12V10H9" stroke="#000" fill="none" strokeWidth={1.3} />,
            <path key="x" d="M4 4L11 11M11 4L4 11" stroke="#000" strokeWidth={2.2} />,
          ].map((p, i) => (
            <div key={i} className={`flex h-[15px] w-[17px] items-center justify-center border-b border-r border-b-[#808080] border-r-[#808080] bg-[#f6f6f6] ${i === 2 ? "ml-[2px]" : ""}`}>
              <svg width={15} height={15}>{p}</svg>
            </div>
          ))}
        </div>
      </div>

      {/* toolbar 1 */}
      <div className="flex h-[27px] shrink-0 items-center border-b border-t border-b-[#a0a0a0] border-t-white pb-[2px] pl-[4px]">
        <Grip />
        <div className="flex pl-[4px]">
          {topBar.map(([icon, text, width]) => (
            <div key={text} className={`flex items-center gap-[3px] ${width}`}>
              {icon}
              <span>{text}</span>
            </div>
          ))}
        </div>
      </div>

      {/* toolbar 2 */}
      <div className="flex h-[26px] shrink-0 items-center border-b border-t border-b-[#a0a0a0] border-t-white">
        <div className="ml-[4px] w-[2px] shrink-0"><Grip /></div>
        {midBar}
      </div>

      {/* toolbar 3 */}
      <div className="flex h-[26px] shrink-0 items-center border-b border-t border-b-[#a0a0a0] border-t-white pl-[4px]">
        <div className="mr-[2px]"><Grip /></div>
        {lowBar.map((group, g) => (
          <React.Fragment key={g}>
            {g > 0 && <SepGrip cls={g === 3 ? "w-[9px]" : "w-[10px]"} />}
            {group.map((icon, i) => (
              <Slot key={i} on={g === 3 && i === 2}>{icon}</Slot>
            ))}
          </React.Fragment>
        ))}
      </div>

      {/* chart */}
      <div className="relative min-h-0 flex-1 overflow-hidden bg-white">
        <Chart />
        <div className="absolute bottom-[1px] right-0 flex flex-col gap-[7px]">
          {[
            "M6 3H16M8 7H14M4 11H18",
            "M6 4H16M3 10H19",
            "M4 7H19",
            "M5 7H18",
          ].map((d, i) => (
            <div key={d} className="h-[15px] w-[24px] border-b-2 border-r-2 border-b-[#707070] border-r-[#707070] bg-[#f0f0f0]">
              <svg width={22} height={13}><path d={d} stroke={i === 3 ? "#707070" : "#000"} strokeWidth={1.2} />{i === 3 && <path d="M15 4V10" stroke="#3040d0" />}</svg>
            </div>
          ))}
        </div>
        <div className="absolute bottom-[2px] left-[1px] flex h-[16px] w-[24px] items-center justify-center border-b-2 border-r-2 border-b-[#707070] border-r-[#707070] bg-[#f0f0f0]">
          <svg width={10} height={9}><path d="M5 1L9 8H1Z" fill="none" stroke="#303060" /></svg>
        </div>
        <div className="absolute inset-x-0 bottom-0 h-[2px] bg-[#a0a0a0]" />
      </div>
    </div>
  </div>
);

export default App;
